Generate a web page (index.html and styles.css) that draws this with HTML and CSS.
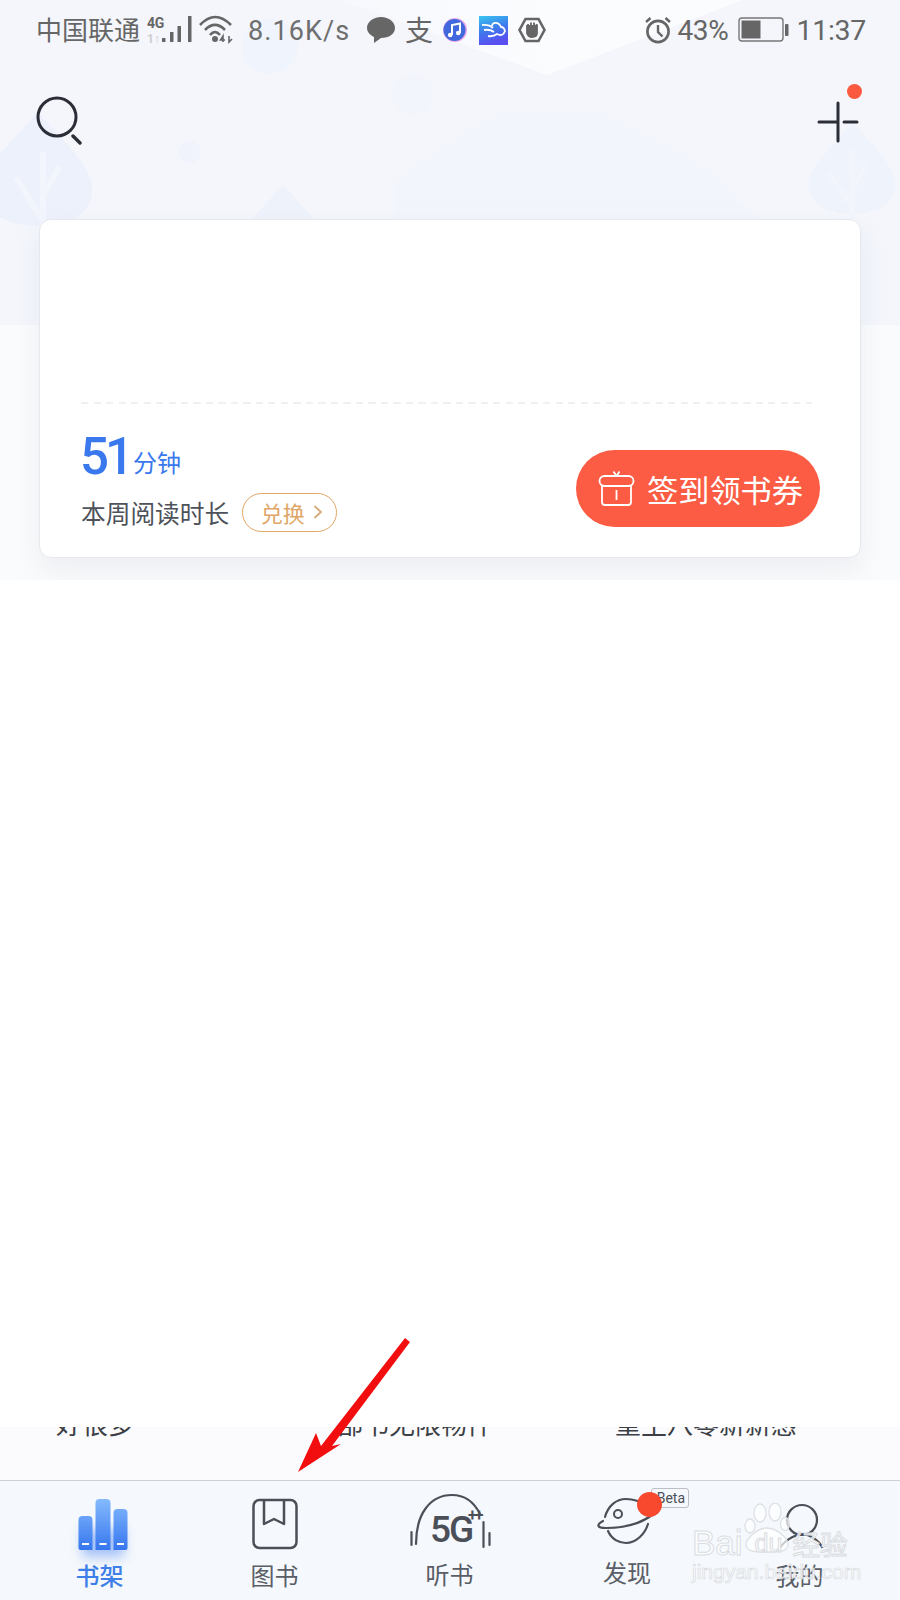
FILE: index.html
```html
<!DOCTYPE html>
<html lang="zh">
<head>
<meta charset="utf-8">
<title>书架</title>
<link rel="stylesheet" href="styles.css">
</head>
<body>
<div class="page">
  <section class="head">
    <svg class="hero-bg" viewBox="0 0 900 325" width="900" height="325">
      <defs>
        <linearGradient id="tri" x1="0" y1="0" x2="1" y2="0"><stop offset="0" stop-color="#f6f8fd"/><stop offset="0.5" stop-color="#fbfcfe"/><stop offset="1" stop-color="#fbfcfe"/></linearGradient>
        <linearGradient id="mt" x1="0" y1="0" x2="0" y2="1"><stop offset="0" stop-color="#f4f6fc"/><stop offset="1" stop-color="#f0f4fb"/></linearGradient>
      </defs>
      <rect width="900" height="325" fill="#f4f6fc"/>
      <polygon points="340,0 743,0 547,75" fill="url(#tri)"/>
      <polygon points="547,75 700,165 760,219 760,325 395,325 395,180" fill="url(#mt)"/>
      <circle cx="270" cy="46" r="28" fill="#f0f4fc"/>
      <circle cx="413" cy="95" r="20" fill="#f2f5fc"/>
      <circle cx="190" cy="152" r="11" fill="#f0f3fb"/>
      <path d="M250 222 L283 184 L316 222 Z" fill="#eef2fb"/>
      <path d="M38 112 C62 140 92 165 92 190 C92 215 68 226 38 226 C10 226 -16 215 -16 190 C-16 165 14 140 38 112 Z" fill="#edf1fb"/>
      <path d="M43 152 V260 M43 195 L60 166 M43 222 L16 177" stroke="#f2f5fc" stroke-width="6" fill="none"/>
      <path d="M853 122 C872 145 895 165 895 185 C895 205 875 214 853 214 C830 214 809 205 809 185 C809 165 834 145 853 122 Z" fill="#eff3fb"/>
      <path d="M852 150 V250 M852 190 L868 162 M852 205 L828 172" stroke="#f3f5fc" stroke-width="5" fill="none"/>
    </svg>

    <div class="status">
      <span class="carrier">中国联通</span>
      <span class="net">
        <svg width="48" height="30" viewBox="0 0 48 30">
          <text x="0" y="12" class="net-4g">4G</text>
          <text x="0" y="27" class="net-1k">1↑</text>
          <g fill="#666">
            <rect x="15" y="22" width="3.5" height="4"/>
            <rect x="23" y="16" width="3.5" height="10"/>
            <rect x="30.5" y="10" width="3.5" height="16"/>
            <rect x="41" y="0" width="3.5" height="26"/>
          </g>
        </svg>
      </span>
      <svg class="wifi" width="34" height="30" viewBox="0 0 34 30" fill="none" stroke="#666" stroke-width="2.6">
        <path d="M1 10 Q16 -6 32 10"/><path d="M6 15 Q16 5 26 15"/><path d="M11 20 Q16 14 21 20"/>
        <circle cx="16" cy="24" r="3" fill="#666" stroke="none"/>
        <path d="M24 27 V21 L21.5 25 H26 M30 21 V27 L33 24" stroke-width="1.6"/>
      </svg>
      <span class="speed">8.16K/s</span>
      <svg class="s-chat" width="30" height="28" viewBox="0 0 30 28"><path d="M15 1 C23 1 29 6 29 12 C29 18 23 22 15 22 L8 27 L8 21 C4 19 1 16 1 12 C1 6 7 1 15 1 Z" fill="#666"/></svg>
      <span class="s-ali">支</span>
      <svg class="s-music" width="26" height="26" viewBox="0 0 26 26">
        <circle cx="13" cy="13" r="12" fill="#e9a6e6"/><circle cx="12.5" cy="13" r="11" fill="#4169dd"/>
        <path d="M10 18 V8 L18 6.5 V16" fill="none" stroke="#fff" stroke-width="2"/><circle cx="8.2" cy="18" r="2.3" fill="#fff"/><circle cx="16.2" cy="16" r="2.3" fill="#fff"/>
      </svg>
      <svg class="s-cloud" width="29" height="29" viewBox="0 0 29 29">
        <defs><linearGradient id="cl" x1="0" y1="0" x2="0.3" y2="1"><stop offset="0" stop-color="#37c6ee"/><stop offset="0.55" stop-color="#3f78ee"/><stop offset="1" stop-color="#5a4ff0"/></linearGradient></defs>
        <rect width="29" height="29" fill="url(#cl)"/>
        <path d="M3 9 Q10 8 14 12 M5 14 Q11 13 15 16 M9 20 Q14 21 18 18 Q24 21 26 15 Q25 11 22 11 Q20 6 15 7 Q13 8 13 10" fill="none" stroke="#fff" stroke-width="1.8"/>
      </svg>
      <svg class="s-hand" width="28" height="26" viewBox="0 0 28 26">
        <polygon points="7.5,2 20.5,2 26.5,13 20.5,24 7.5,24 1.5,13" fill="none" stroke="#666" stroke-width="2.6"/>
        <path d="M9 9 H19 V16 Q19 20 14 20 Q10 20 9 16 Z M10 7 V12 M13 5.5 V12 M16 5.5 V12 M18.6 7 V12" fill="#666" stroke="#666" stroke-width="1.8"/>
      </svg>
      <span class="spacer"></span>
      <svg class="s-alarm" width="28" height="28" viewBox="0 0 28 28" fill="none" stroke="#666" stroke-width="2.6">
        <circle cx="14" cy="15.5" r="10.6"/><path d="M14 9 V16 L18.5 20.5" stroke-width="2.4"/><path d="M2 6 L6.5 2 M26 6 L21.5 2" stroke-width="2.4"/>
      </svg>
      <span class="pct">43%</span>
      <svg class="s-batt" width="51" height="26" viewBox="0 0 51 26">
        <rect x="1" y="1" width="44" height="23" rx="3" fill="none" stroke="#777" stroke-width="1.4"/>
        <rect x="3.5" y="3.5" width="19" height="18" fill="#666"/>
        <rect x="47" y="7" width="3.5" height="12" rx="1" fill="#666"/>
      </svg>
      <span class="time">11:37</span>
    </div>

    <div class="topbar">
      <svg width="46" height="50" viewBox="0 0 46 50" fill="none" stroke="#2b2e36">
        <circle cx="21" cy="21" r="19" stroke-width="3"/>
        <path d="M37 40 L44 47" stroke-width="3.4" stroke-linecap="round"/>
      </svg>
      <div class="plus">
        <svg width="42" height="42" viewBox="0 0 42 42" stroke="#2b2e36" stroke-width="3" stroke-linecap="round">
          <path d="M21 2 V40 M2 21 H21 M27 21 H40"/>
        </svg>
        <span class="dot"></span>
      </div>
    </div>

    <div class="card">
      <div class="dash"></div>
      <div class="card-row">
        <div class="stat-col">
          <div class="stat"><span class="num">51</span><span class="unit">分钟</span></div>
          <div class="label-row">
            <span class="label">本周阅读时长</span>
            <span class="pill">兑换
              <svg width="10" height="16" viewBox="0 0 10 16" fill="none" stroke="#d9a878" stroke-width="1.8"><path d="M1.5 2 L8 8 L1.5 14"/></svg>
            </span>
          </div>
        </div>
        <div class="signin">
          <svg width="37" height="37" viewBox="0 0 37 37" fill="none" stroke="#fff" stroke-width="1.8" stroke-linejoin="round">
            <rect x="1.5" y="6" width="34" height="10" rx="5"/>
            <path d="M4 16 V32 Q4 35 7 35 H30 Q33 35 33 32 V16"/>
            <path d="M18.5 20 V30"/>
            <path d="M15.5 1.5 L18.5 6 L21.5 1.5"/>
          </svg>
          <span>签到领书券</span>
        </div>
      </div>
    </div>
  </section>

  <div class="blank"></div>

  <div class="peek">
    <span class="peek-a">好很多</span>
    <span class="peek-b">部书无限畅件</span>
    <span class="peek-c">重生八零新新感</span>
  </div>

  <nav class="nav">
    <div class="tab active">
      <div class="tab-icon">
        <svg width="60" height="64" viewBox="0 0 60 64">
          <defs>
            <linearGradient id="sb" x1="0" y1="0" x2="0" y2="1"><stop offset="0" stop-color="#85bafc"/><stop offset="1" stop-color="#3676ef"/></linearGradient>
            <filter id="gl" x="-40%" y="-40%" width="180%" height="180%"><feGaussianBlur stdDeviation="6"/></filter>
          </defs>
          <rect x="12" y="30" width="42" height="28" fill="#6f9df5" opacity="0.6" filter="url(#gl)"/>
          <path d="M8.5 21 Q8.5 17 12.5 17 H18.5 Q22.5 17 22.5 21 V51 H10.5 Q8.5 51 8.5 49 Z M25.5 4 Q25.5 0 29.5 0 H36.5 Q40.5 0 40.5 4 V51 H25.5 Z M43.5 14 Q43.5 10 47.5 10 H53.5 Q57.5 10 57.5 14 V49 Q57.5 51 55.5 51 H43.5 Z" fill="url(#sb)"/>
          <path d="M12 45 H19 M29.5 45 H36.5 M47 45 H54" stroke="#fff" stroke-width="2"/>
        </svg>
      </div>
      <span class="tab-label">书架</span>
    </div>
    <div class="tab">
      <div class="tab-icon">
        <svg width="46" height="50" viewBox="0 0 46 50" fill="none" stroke="#4b4f58" stroke-width="2.5" stroke-linejoin="round">
          <rect x="1.5" y="1" width="43" height="48" rx="6"/>
          <path d="M12 1 V25 L22 20 L32 25 V1"/>
        </svg>
      </div>
      <span class="tab-label">图书</span>
    </div>
    <div class="tab tab-listen">
      <div class="tab-icon">
        <svg width="84" height="56" viewBox="0 0 84 56" fill="none" stroke="#4b4f58" stroke-width="2.2" stroke-linecap="round">
          <path d="M8 50 C8 20 22 1 44 1 C56 1 66 8 72 20"/>
          <path d="M3.5 38 V51 M75.5 28 V53 M81.5 39 V51"/>
          <text x="22" y="48" class="g5">5G</text>
          <text x="60" y="27" class="gplus">++</text>
        </svg>
      </div>
      <span class="tab-label">听书</span>
    </div>
    <div class="tab tab-find">
      <div class="tab-icon">
        <svg width="58" height="50" viewBox="0 0 58 50" fill="none" stroke="#4b4f58" stroke-width="2.2" stroke-linecap="round">
          <path d="M7 19 C10 8 18 1 28 1 C36 1 42 3 48 8"/>
          <path d="M10 33 C14 42 22 45 28 45 C38 45 47 36 50 26"/>
          <path d="M5 23 C-2 27 -1 30 8 30 C24 30 42 26 54 17"/>
          <circle cx="20" cy="16" r="4" stroke-width="2"/>
        </svg>
      </div>
      <span class="tab-label">发现</span>
      <span class="beta">Beta</span>
      <span class="find-dot"></span>
    </div>
    <div class="tab tab-me">
      <div class="tab-icon">
        <svg width="46" height="48" viewBox="0 0 46 48" fill="none" stroke="#4b4f58" stroke-width="2.2">
          <circle cx="25" cy="16" r="15"/>
          <path d="M3.5 43 C8 37 14 33 20.5 31 M24 30 C32 30 42 36 45.5 44"/>
        </svg>
      </div>
      <span class="tab-label">我的</span>
    </div>
  </nav>

  <svg class="arrow" width="130" height="150" viewBox="0 0 130 150">
    <polygon points="1,138 19,99 24,112 108,4 113,8 35,112 44,110" fill="#f20d0f"/>
  </svg>

  <div class="watermark">
    <svg class="paw" width="46" height="50" viewBox="0 0 46 50" fill="#ffffff" fill-opacity="0.7" stroke="#dde0e5" stroke-width="1.3">
      <ellipse cx="6" cy="23" rx="5" ry="7"/><ellipse cx="16" cy="10" rx="6" ry="9"/><ellipse cx="31" cy="9" rx="6" ry="9"/><ellipse cx="41" cy="21" rx="4.5" ry="6.5"/>
      <path d="M23 25 C33 25 45 36 44 42 C43 50 31 49 23 49 C15 49 3 50 2 42 C2 36 13 25 23 25 Z"/>
    </svg>
    <div class="wm-line"><span>Bai</span><span class="wm-du">du</span><span class="wm-cn">经验</span></div>
    <div class="wm-url">jingyan.baidu.com</div>
  </div>
</div>
</body>
</html>
```

FILE: styles.css
```css
* { box-sizing: border-box; }
html, body { margin: 0; padding: 0; background: #fff; }
body { font-family: "Noto Sans CJK SC", "Noto Sans", sans-serif; }

.page {
  position: relative;
  width: 900px;
  height: 1600px;
  overflow: hidden;
  display: flex;
  flex-direction: column;
  background: #fff;
}

/* head */
.head {
  position: relative;
  height: 580px;
  flex: none;
  overflow: hidden;
  background: #fafbfc;
}
.hero-bg { position: absolute; left: 0; top: 0; display: block; }

/* status bar */
.status {
  position: relative;
  height: 60px;
  display: flex;
  align-items: center;
  padding: 0 34px 0 36px;
  color: #666;
  font-family: Roboto, sans-serif;
  font-weight: 300;
}
.carrier {
  font-family: "Noto Sans CJK SC", sans-serif;
  font-weight: 400;
  font-size: 26px;
  line-height: 30px;
  width: 108px;
  margin-top: -2px;
}
.net { width: 48px; height: 30px; margin-left: 3px; margin-top: 1px; }
.net svg { display: block; overflow: visible; }
.net-4g { font: 700 14px "Roboto", sans-serif; fill: #666; letter-spacing: -0.4px; }
.net-1k { font: 700 12px "Roboto", sans-serif; fill: #ccc; }
.wifi { margin-left: 4px; margin-top: 0; flex: none; overflow: visible; }
.speed { font-size: 27px; letter-spacing: 1.1px; margin-left: 15px; width: 118px; margin-top: 2px; font-weight: 400; color: #6e6e6e; }
.s-chat { flex: none; margin-top: 0; }
.s-ali { font-size: 28px; line-height: 30px; margin-left: 9px; width: 30px; font-family: "Noto Sans CJK SC", sans-serif; font-weight: 400; margin-top: -2px; }
.s-music { flex: none; margin-left: 7px; }
.s-cloud { flex: none; margin-left: 11px; }
.s-hand { flex: none; margin-left: 10px; }
.spacer { flex: 1; }
.s-alarm { flex: none; margin-right: 6px; }
.pct { font-size: 28px; font-weight: 400; width: 60px; margin-top: 1px; letter-spacing: -0.4px; }
.s-batt { flex: none; margin-right: 8px; }
.time { font-size: 28.5px; font-weight: 400; letter-spacing: -0.3px; margin-top: 1px; }

/* top icons */
.topbar {
  position: relative;
  height: 159px;
  display: flex;
  justify-content: space-between;
  align-items: flex-start;
  padding: 36px 41px 0 36px;
}
.plus { position: relative; margin-top: 5px; }
.plus svg { display: block; }
.dot {
  position: absolute;
  right: -3px;
  top: -17px;
  width: 15px;
  height: 15px;
  border-radius: 50%;
  background: #fb5a41;
}

/* card */
.card {
  position: relative;
  height: 339px;
  margin: 0 39px 0 39px;
  padding: 182px 40px 0 41px;
  background: #fff;
  border: 1px solid #e6e8ec;
  border-radius: 12px;
  box-shadow: 0 12px 26px rgba(190, 196, 208, 0.22);
}
.dash {
  height: 2px;
  width: 731px;
  background-image: repeating-linear-gradient(90deg, #eef0f2 0 7px, transparent 7px 12.5px);
}
.card-row {
  display: flex;
  justify-content: space-between;
  align-items: flex-start;
  margin-top: 22px;
}
.stat { display: flex; align-items: baseline; height: 62px; margin-left: -1px; }
.num {
  font-family: Roboto, sans-serif;
  font-weight: 500;
  font-size: 51px;
  line-height: 62px;
  letter-spacing: -4px;
  color: #3a78ee;
}
.unit {
  font-size: 24px;
  line-height: 30px;
  color: #3a78ee;
  margin-left: 3px;
  position: relative;
  top: -2px;
}
.label-row { display: flex; align-items: center; margin-top: 4px; }
.label { font-size: 24.7px; line-height: 40px; color: #4e525a; }
.pill {
  display: flex;
  align-items: center;
  justify-content: center;
  gap: 8px;
  width: 95px;
  height: 39px;
  margin-left: 13px;
  padding-left: 4px;
  border: 1.5px solid #e2a765;
  border-radius: 20px;
  font-size: 22px;
  line-height: 30px;
  color: #dfa668;
  white-space: nowrap;
}
.signin {
  display: flex;
  align-items: center;
  gap: 12px;
  width: 244px;
  height: 77px;
  margin-top: 24px;
  padding-left: 22px;
  border-radius: 39px;
  background: #fb5c43;
  color: #fff;
  font-size: 31.2px;
  line-height: 40px;
  white-space: nowrap;
}
.signin svg { flex: none; }

/* middle */
.blank { flex: 1; background: #fff; }

/* clipped row */
.peek {
  position: relative;
  height: 53px;
  flex: none;
  overflow: hidden;
  background: #fbfbfd;
  font-size: 26px;
  line-height: 30px;
  color: #3c3f45;
  white-space: nowrap;
}
.peek span { display: block; position: absolute; top: -19px; }
.peek-a { left: 56px; }
.peek-b { left: 337px; }
.peek-c { left: 615px; }

/* nav */
.nav {
  position: relative;
  height: 120px;
  flex: none;
  display: grid;
  grid-template-columns: 175px 175px 175px 180px 165px;
  padding-left: 12px;
  background: #f5f8fc;
  border-top: 1px solid #cfd1d4;
}
.tab {
  position: relative;
  display: flex;
  flex-direction: column;
  align-items: center;
}
.tab-icon {
  height: 71px;
  padding-top: 18px;
  display: flex;
  justify-content: center;
  align-items: flex-start;
}
.tab-icon svg { display: block; overflow: visible; }
.tab-label {
  font-size: 24px;
  line-height: 32px;
  color: #5a5e66;
  margin-top: 7px;
}
.active .tab-label { color: #3f7fe8; font-weight: 500; }
.tab-listen .tab-icon { padding-top: 13px; }
.tab-listen .tab-label { margin-top: 6px; }
.tab-find .tab-icon { padding-top: 17px; }
.tab-find .tab-label { margin-top: 4px; }
.tab-me .tab-icon { padding-top: 23px; }
.tab-me .tab-label { margin-top: 7px; }
.g5 { font: 500 37px Roboto, sans-serif; fill: #4b4f58; stroke: none; letter-spacing: -2px; }
.gplus { font: 700 16px Roboto, sans-serif; fill: #4b4f58; stroke: none; letter-spacing: -2px; }
.beta {
  position: absolute;
  left: 114px;
  top: 7px;
  width: 38px;
  height: 20px;
  border: 1px solid #bcc0c6;
  border-radius: 3px;
  font: 400 14px/18px Roboto, sans-serif;
  color: #4b4f58;
  text-align: right;
  padding-right: 3px;
}
.find-dot {
  position: absolute;
  left: 100px;
  top: 11px;
  width: 25px;
  height: 25px;
  border-radius: 50%;
  background: #f8492f;
}

/* annotation arrow */
.arrow { position: absolute; left: 297px; top: 1334px; }

/* image host watermark */
.watermark {
  position: absolute;
  left: 690px;
  top: 1503px;
  width: 165px;
  height: 80px;
  color: rgba(255, 255, 255, 0.75);
  -webkit-text-stroke: 1px #d9dce1;
  font-family: "Liberation Sans", sans-serif;
}
.paw { position: absolute; left: 54px; top: 0; }
.wm-line {
  position: absolute;
  left: 2px;
  top: 20px;
  display: flex;
  align-items: center;
  font-size: 35px;
  line-height: 40px;
  white-space: nowrap;
}
.wm-du { font-size: 25px; margin-left: 12px; }
.wm-cn { font-family: "Noto Sans CJK SC", sans-serif; font-size: 27.5px; margin-left: 10px; }
.wm-url {
  position: absolute;
  left: 2px;
  top: 57px;
  font-size: 21px;
  line-height: 24px;
  white-space: nowrap;
  -webkit-text-stroke: 0.7px #d9dce1;
}
```
